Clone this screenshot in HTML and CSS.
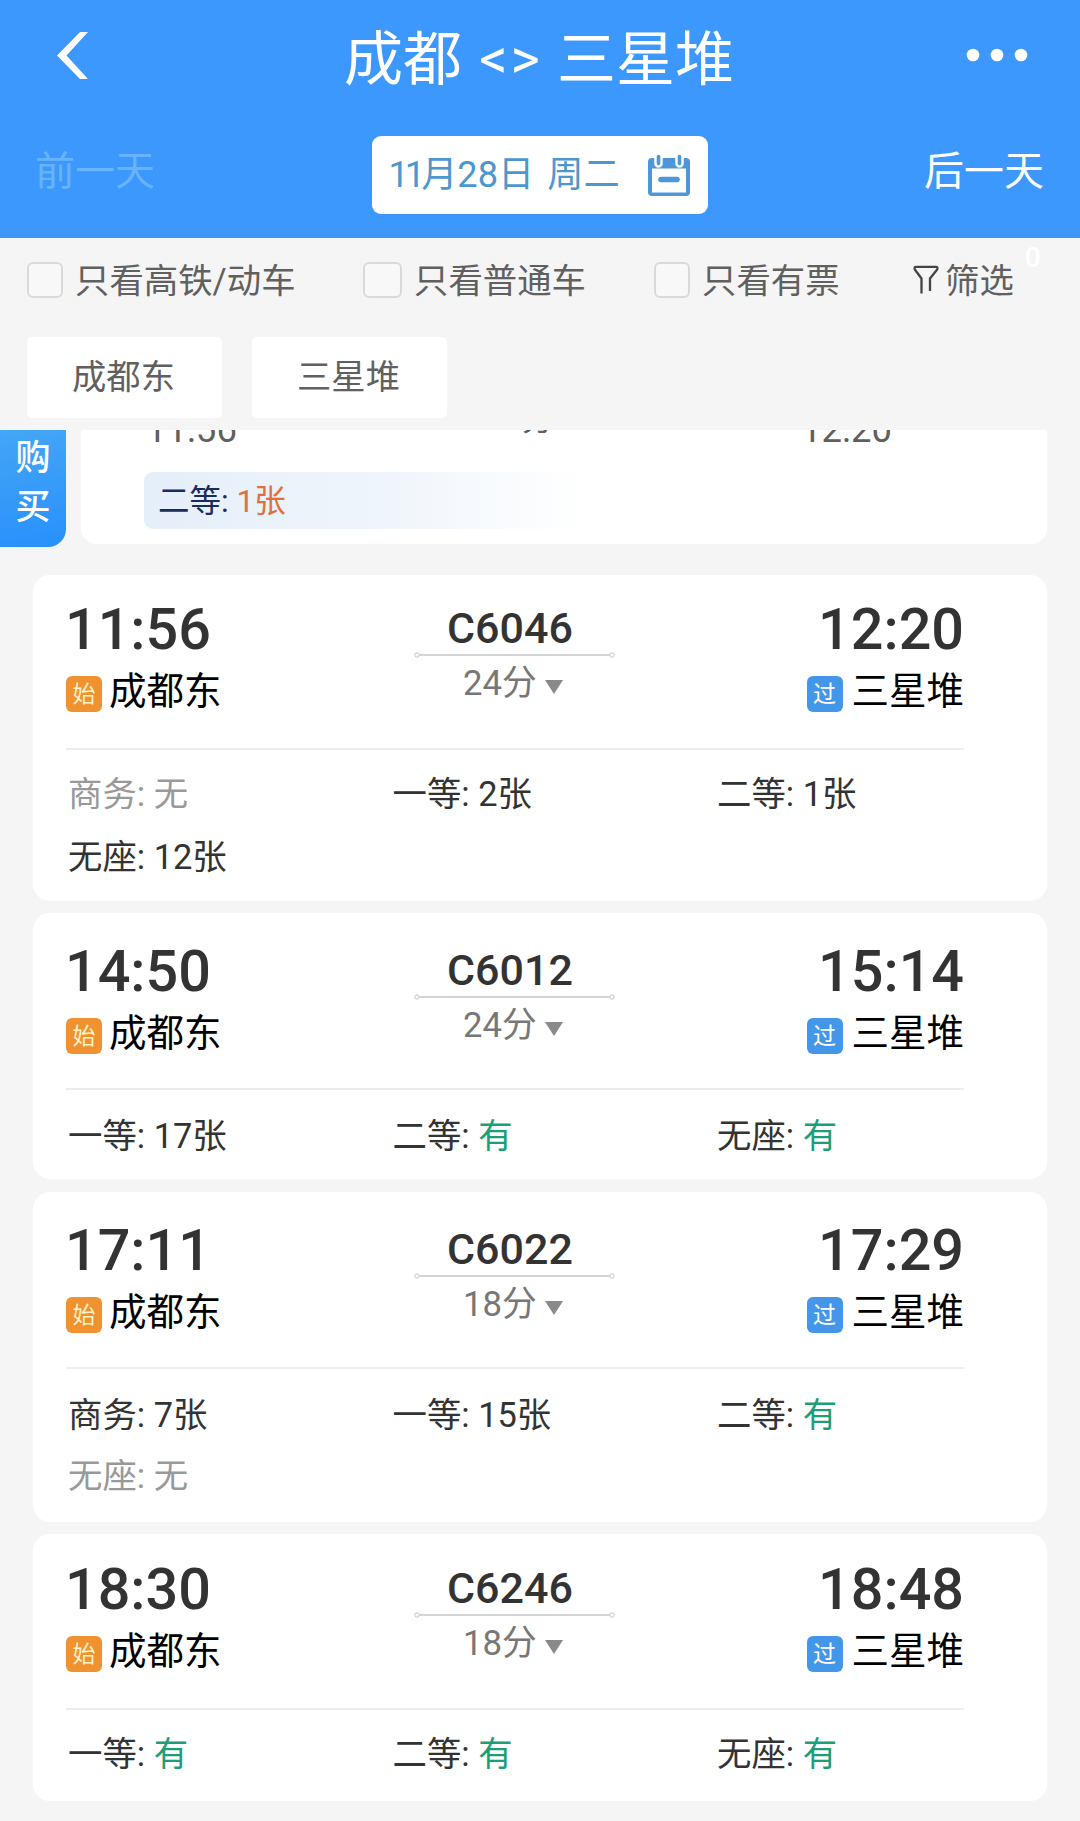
FILE: index.html
```html
<!DOCTYPE html>
<html lang="zh-CN">
<head>
<meta charset="utf-8">
<title>成都 - 三星堆</title>
<link rel="stylesheet" href="styles.css">
</head>
<body>
<header class="header">
  <div class="topbar">
    <svg class="back" width="34" height="50" viewBox="0 0 34 50"><path d="M33 2H25L2 25.500 25 49H33L11.500 25.500Z" fill="#fff"/></svg>
    <h1 class="title"><span>成都</span><span class="arrows">&lt;&gt;</span><span>三星堆</span></h1>
    <svg class="more" width="62" height="14" viewBox="0 0 62 14" fill="#fff"><circle cx="7" cy="7" r="6.300"/><circle cx="31" cy="7" r="6.300"/><circle cx="55" cy="7" r="6.300"/></svg>
  </div>
  <div class="daybar">
    <span class="day day--off">前一天</span>
    <div class="date">
      <span class="date__text"><span class="month">11</span>月28日 周二</span>
      <svg width="42" height="43" viewBox="0 0 42 43">
        <path d="M4 4h34a4 4 0 0 1 4 4v30a4 4 0 0 1-4 4H4a4 4 0 0 1-4-4V8a4 4 0 0 1 4-4z" fill="#4d97d9"/>
        <path d="M4 14.500h34v24H4z" fill="#fff"/>
        <path d="M10.500 2.500v7M31.500 2.500v7" stroke="#fff" stroke-width="8.500" stroke-linecap="round"/>
        <path d="M10.500 2.500v7M31.500 2.500v7" stroke="#4d97d9" stroke-width="3.600" stroke-linecap="round"/>
        <path d="M13 25.500h16" stroke="#4d97d9" stroke-width="5.600" stroke-linecap="round"/>
      </svg>
    </div>
    <span class="day">后一天</span>
  </div>
</header>

<section class="filters">
  <label class="check"><i class="box"></i><span>只看高铁/动车</span></label>
  <label class="check"><i class="box box--wide"></i><span>只看普通车</span></label>
  <label class="check"><i class="box"></i><span>只看有票</span></label>
  <div class="sift">
    <svg width="26" height="30" viewBox="0 0 26 30"><path d="M8.500 28.500V13.500L1.800 4.500Q1 1.800 3 1.800H23Q25 1.800 24.200 4.500L17 13.500V26" fill="none" stroke="#444" stroke-width="2.300"/></svg>
    <span>筛选</span><b class="count">0</b>
  </div>
</section>
<nav class="stations"><span class="chip">成都东</span><span class="chip">三星堆</span></nav>

<main>
  <div class="peek">
    <div class="buy"><span>购</span><span>买</span></div>
    <div class="peek__card">
      <div class="peek__times"><span>11:56</span><span class="peek__dur">24分</span><span>12:20</span></div>
      <div class="peek__seat">二等: <em>1张</em></div>
    </div>
  </div>

  <article class="card card--a">
    <div class="trip">
      <div><div class="time">11:56</div><div class="stop"><i class="tag tag--from">始</i>成都东</div></div>
      <div class="mid"><div class="no">C6046</div><svg class="rail" width="201" height="6" viewBox="0 0 201 6"><use href="#rail"/></svg><div class="dur">24分<i class="tri"></i></div></div>
      <div class="end"><div class="time">12:20</div><div class="stop"><i class="tag tag--via">过</i>三星堆</div></div>
    </div>
    <div class="seats"><span class="none">商务: 无</span><span>一等: 2张</span><span>二等: 1张</span><span>无座: 12张</span></div>
  </article>

  <article class="card card--b">
    <div class="trip">
      <div><div class="time">14:50</div><div class="stop"><i class="tag tag--from">始</i>成都东</div></div>
      <div class="mid"><div class="no">C6012</div><svg class="rail" width="201" height="6" viewBox="0 0 201 6"><use href="#rail"/></svg><div class="dur">24分<i class="tri"></i></div></div>
      <div class="end"><div class="time">15:14</div><div class="stop"><i class="tag tag--via">过</i>三星堆</div></div>
    </div>
    <div class="seats"><span>一等: 17张</span><span>二等: <em>有</em></span><span>无座: <em>有</em></span></div>
  </article>

  <article class="card card--c">
    <div class="trip">
      <div><div class="time">17:11</div><div class="stop"><i class="tag tag--from">始</i>成都东</div></div>
      <div class="mid"><div class="no">C6022</div><svg class="rail" width="201" height="6" viewBox="0 0 201 6"><use href="#rail"/></svg><div class="dur">18分<i class="tri"></i></div></div>
      <div class="end"><div class="time">17:29</div><div class="stop"><i class="tag tag--via">过</i>三星堆</div></div>
    </div>
    <div class="seats"><span>商务: 7张</span><span>一等: 15张</span><span>二等: <em>有</em></span><span class="none">无座: 无</span></div>
  </article>

  <article class="card card--d">
    <div class="trip">
      <div><div class="time">18:30</div><div class="stop"><i class="tag tag--from">始</i>成都东</div></div>
      <div class="mid"><div class="no">C6246</div><svg class="rail" width="201" height="6" viewBox="0 0 201 6"><use href="#rail"/></svg><div class="dur">18分<i class="tri"></i></div></div>
      <div class="end"><div class="time">18:48</div><div class="stop"><i class="tag tag--via">过</i>三星堆</div></div>
    </div>
    <div class="seats"><span>一等: <em>有</em></span><span>二等: <em>有</em></span><span>无座: <em>有</em></span></div>
  </article>
</main>
<svg class="defs" width="0" height="0"><defs><g id="rail" fill="none" stroke="#c4c4c4"><path d="M5.500 3h190" stroke-width="1.300"/><circle cx="3" cy="3" r="2.200"/><circle cx="198" cy="3" r="2.200"/></g></defs></svg>
</body>
</html>
```
FILE: styles.css
```css
* { box-sizing: border-box; }
body {
  margin: 0;
  height: 1821px;
  overflow: hidden;
  background: #f5f5f5;
  color: #333;
  font-family: Roboto, "Noto Sans CJK SC", sans-serif;
  font-weight: 400;
}
i, em { font-style: normal; }
svg { display: block; flex: none; }
.defs { display: none; }

/* header */
.header { height: 238px; background: #3c98fc; color: #fff; }
.topbar {
  display: flex;
  justify-content: space-between;
  align-items: center;
  height: 110px;
  padding: 0 52px 0 55px;
}
.title {
  display: flex;
  margin: 9px 0 0 23px;
  font-size: 59px;
  line-height: 80px;
  font-weight: 400;
}
.arrows { margin: -1px 14px 0 17px; font-size: 56px; letter-spacing: 3px; }
.daybar {
  display: flex;
  justify-content: space-between;
  align-items: center;
  height: 78px;
  margin-top: 26px;
  padding: 0 36px 0 35px;
}
.day { font-size: 40px; line-height: 60px; margin-top: -6px; }
.day--off { color: #66b4fe; }
.date {
  display: flex;
  justify-content: space-between;
  align-items: center;
  width: 336px;
  height: 78px;
  padding: 0 18px 0 17px;
  border-radius: 9px;
  background: #fff;
}
.date__text {
  font-size: 36.200px;
  line-height: 50px;
  color: #4d97cf;
  white-space: nowrap;
  word-spacing: 4px;
}
.month { letter-spacing: -4px; }

/* filters */
.filters {
  display: grid;
  grid-template-columns: 336px 291px 259px 1fr;
  align-items: center;
  height: 84px;
  padding-left: 27px;
  color: #606060;
  font-size: 34.400px;
  line-height: 44px;
}
.check { display: flex; align-items: center; gap: 12px; white-space: nowrap; }
.check span, .sift span { padding-top: 2px; }
.box {
  flex: none;
  width: 36px;
  height: 36px;
  border: 2.500px solid #dadada;
  border-radius: 6px;
  background: #f8f8f8;
}
.box--wide { width: 39px; }
.sift { display: flex; align-items: center; }
.sift span { margin-left: 6px; }
.count { margin: -44px 0 0 11px; color: #fff; font-size: 28px; font-weight: 500; }
.stations { display: flex; gap: 30px; height: 108px; padding: 15px 27px 0; }
.chip {
  width: 195px;
  height: 81px;
  padding-right: 2px;
  border-radius: 5px;
  background: #fff;
  color: #606060;
  font-size: 34.300px;
  line-height: 80px;
  text-align: center;
}

/* partly scrolled first result */
.peek { display: flex; height: 117px; margin-bottom: 28px; }
.buy {
  display: flex;
  flex-direction: column;
  align-items: center;
  width: 66px;
  height: 117px;
  padding-top: 4px;
  border-radius: 0 0 18px 0;
  background: linear-gradient(170deg, #45a6f6, #2790fb);
  color: #fff;
  font-size: 35px;
  line-height: 49px;
  font-weight: 500;
}
.peek__card {
  width: 966px;
  height: 114px;
  margin-left: 15px;
  overflow: hidden;
  border-radius: 0 0 16px 16px;
  background: #fff;
}
.peek__times {
  display: flex;
  justify-content: space-between;
  align-items: flex-start;
  margin: -20px 155px 0 65px;
  color: #606060;
  font-size: 36.500px;
  line-height: 40px;
}
.peek__dur { margin: -11px 0 0 1px; font-size: 33px; }
.peek__seat {
  width: 440px;
  height: 57px;
  margin: 22px 0 0 63px;
  padding-left: 14px;
  border-radius: 9px 0 0 9px;
  background: linear-gradient(90deg, #e5eff9, #eef4fb 50%, #fff);
  color: #1b2b5e;
  font-size: 31.500px;
  line-height: 59px;
}
.peek__seat em { color: #e06f3c; }

/* results */
.card { width: 1014px; margin-left: 33px; padding: 0 83px 0 33px; border-radius: 17px; background: #fff; }
.card--a { height: 326px; padding-top: 20px; margin-bottom: 12px; }
.card--b { height: 266px; padding-top: 24px; margin-bottom: 13px; }
.card--c { height: 330px; padding-top: 24px; margin-bottom: 12px; }
.card--d { height: 267px; padding-top: 21px; }
.trip {
  display: grid;
  grid-template-columns: 348px 201px 1fr;
  height: 155px;
  border-bottom: 2px solid #ededed;
}
.card--b .trip, .card--c .trip { height: 153px; }
.end { display: flex; flex-direction: column; align-items: flex-end; }
.time { margin: 0 0 0 -1px; padding-top: 1px; font-size: 57.500px; line-height: 68px; font-weight: 500; }
.stop {
  display: flex;
  align-items: flex-start;
  gap: 7px;
  margin-top: 5px;
  color: #000;
  font-size: 37.500px;
  line-height: 44px;
}
.end .stop { gap: 9px; }
.tag {
  width: 36px;
  height: 36px;
  margin-top: 7px;
  border-radius: 6px;
  color: #fff;
  font-size: 23px;
  line-height: 37px;
  text-align: center;
}
.tag--from { background: #f0922f; color: #fff3c8; }
.tag--via { background: #4496e8; }
.no { margin: 8px 0 0 33px; font-size: 43px; line-height: 50px; font-weight: 500; }
.rail { margin-top: -1px; }
.dur {
  display: flex;
  align-items: center;
  gap: 8px;
  margin: 5px 0 0 49px;
  color: #777;
  font-size: 34.700px;
  line-height: 40px;
}
.tri {
  margin-top: 7px;
  border: 9px solid transparent;
  border-top: 14px solid #8a8a8a;
  border-bottom: 0;
}
.seats {
  display: grid;
  grid-template-columns: 324.500px 324.500px 1fr;
  row-gap: 23px;
  padding: 24px 0 0 2px;
  font-size: 34.400px;
  line-height: 40px;
  white-space: nowrap;
}
.card--b .seats, .card--c .seats { padding-top: 26px; }
.card--c .seats { row-gap: 21px; }
.seats em { color: #1e9e78; }
.none { color: #999; }
```
